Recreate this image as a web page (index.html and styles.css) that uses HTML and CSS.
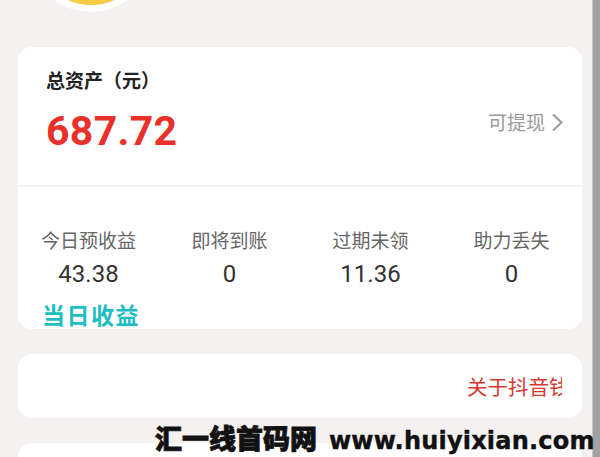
FILE: index.html
```html
<!DOCTYPE html>
<html>
	<head>
		<meta charset="utf-8">
		<title>总资产</title>
		<link rel="stylesheet" href="styles.css">
	</head>
	<body>
		<div class="page">
			<div class="main">
				<!--头像-->
				<div class="header">
					<div class="avatar"></div>
				</div>
				<div class="card">
					<div class="total">
						<div class="title">总资产（元）</div>
						<div class="total-row">
							<div class="amount">687.72</div>
							<a class="withdraw" href="#">可提现
								<svg width="13" height="19" viewBox="0 0 13 19"><path d="M2 1.5 L10.5 9.5 L2 17.5" fill="none" stroke="#9a9a9a" stroke-width="2"/></svg>
							</a>
						</div>
					</div>
					<div class="line"></div>
					<div class="stats">
						<ul class="grid">
							<li><p class="label">今日预收益</p><p class="value">43.38</p></li>
							<li><p class="label">即将到账</p><p class="value">0</p></li>
							<li><p class="label">过期未领</p><p class="value">11.36</p></li>
							<li><p class="label">助力丢失</p><p class="value">0</p></li>
						</ul>
						<div class="today">当日收益</div>
					</div>
				</div>
				<div class="card about">
					<span class="about-text">关于抖音钱包</span>
				</div>
				<div class="card next"></div>
			</div>
			<div class="bar"></div>
		</div>
		<div class="mark">汇一线首码网<span class="mark-url">www.huiyixian.com</span></div>
	</body>
</html>
```

FILE: styles.css
```css
* {
	margin: 0;
	padding: 0;
}

ul {
	list-style: none;
}

a {
	text-decoration: none;
}

body {
	width: 600px;
	height: 457px;
	overflow: hidden;
	position: relative;
	background-color: #F4F1F0;
	font-family: "Noto Sans CJK SC", sans-serif;
}

.page {
	display: flex;
	height: 457px;
}

.main {
	flex: 1;
	padding: 0 10px 0 18px;
}

.bar {
	width: 7px;
	background-color: #A2A2A2;
	border-left: 1px solid #C8C8C8;
}

.header {
	display: flow-root;
	height: 47px;
}

.avatar {
	width: 110px;
	height: 110px;
	margin: -112px 0 0 11px;
	border: 7px solid #FFFFFF;
	border-radius: 50%;
	background-color: #F6CB45;
}

.card {
	background-color: #FFFFFF;
	border-radius: 14px;
}

.total {
	height: 138px;
	padding: 20px 18px 0 28px;
	box-sizing: border-box;
}

.title {
	font-size: 19px;
	line-height: 26px;
	font-weight: bold;
	color: #222222;
}

.total-row {
	display: flex;
	justify-content: space-between;
	align-items: flex-start;
	margin-top: 13px;
}

.amount {
	font-family: Roboto, sans-serif;
	font-size: 41px;
	line-height: 50px;
	font-weight: bold;
	color: #E9302A;
	letter-spacing: 0.3px;
}

.withdraw {
	display: flex;
	align-items: center;
	gap: 6px;
	margin-top: 3px;
	font-size: 19px;
	line-height: 26px;
	color: #999999;
}

.line {
	height: 2px;
	background-color: #F3F3F3;
}

.stats {
	height: 142px;
	padding-top: 40px;
	box-sizing: border-box;
}

.grid {
	display: grid;
	grid-template-columns: repeat(4, 1fr);
}

.grid li {
	text-align: center;
}

.label {
	font-size: 19px;
	line-height: 26px;
	color: #666666;
}

.value {
	margin-top: 6px;
	font-family: Roboto, sans-serif;
	font-size: 24px;
	line-height: 30px;
	color: #333333;
}

.today {
	margin: 11px 0 0 24px;
	font-size: 23px;
	line-height: 28px;
	font-weight: bold;
	color: #1DBDC1;
	letter-spacing: 1.5px;
}

.about {
	display: flex;
	justify-content: flex-end;
	align-items: center;
	height: 64px;
	margin-top: 25px;
	padding-right: 20px;
}

.about-text {
	width: 95px;
	overflow: hidden;
	white-space: nowrap;
	font-size: 20.5px;
	line-height: 28px;
	color: #D8392F;
}

.next {
	height: 14px;
	margin-top: 25px;
	border-radius: 14px 14px 0 0;
}

.mark {
	position: absolute;
	left: 155px;
	top: 422px;
	font-size: 27px;
	line-height: 32px;
	font-weight: 900;
	color: #111111;
	white-space: nowrap;
	-webkit-text-stroke: 0.8px #111111;
}

.mark-url {
	font-family: "DejaVu Sans", sans-serif;
	font-size: 24px;
	font-weight: bold;
	margin-left: 12px;
	letter-spacing: 0.2px;
	-webkit-text-stroke: 0.4px #111111;
}
```
